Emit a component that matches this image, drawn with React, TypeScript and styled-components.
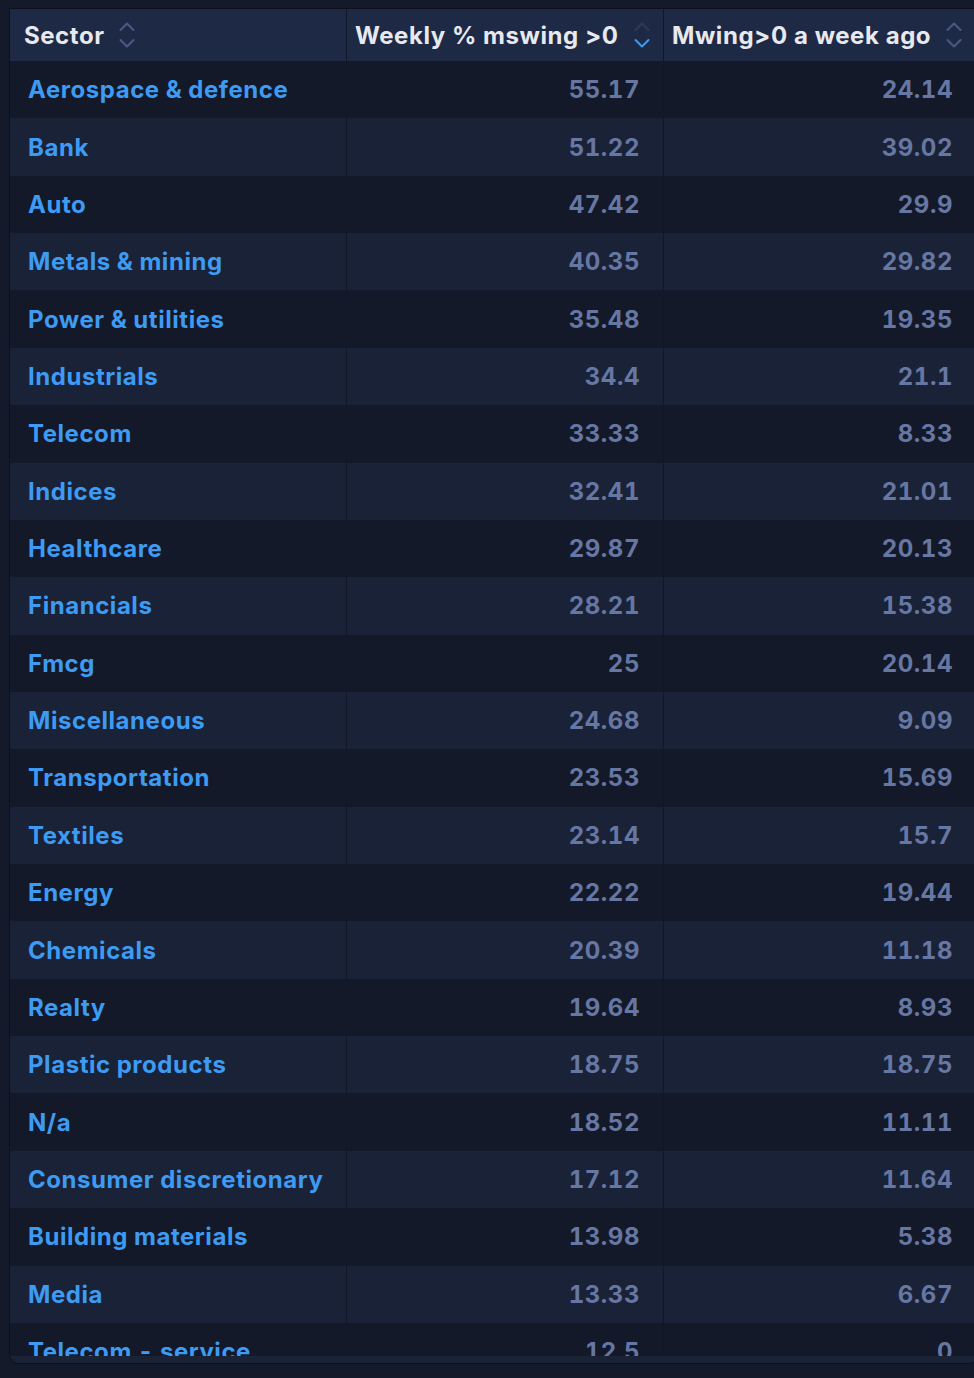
import { FC } from 'react'
import styled, { createGlobalStyle } from 'styled-components'

const GlobalStyle = createGlobalStyle`
  html, body {
    margin: 0;
    padding: 0;
    background: #151a2a;
    overflow: hidden;
    font-family: Inter, 'Noto Sans', sans-serif;
  }
`

const Frame = styled('div')`
  margin: 8px 0 0 9px;
  width: 968px;
  border: 1px solid #0c101b;
  border-radius: 0 0 10px 10px;
  background: #1a2236;
  overflow: hidden;
`

const Scroller = styled('div')`
  height: 1347px;
  overflow: hidden;
`

const Track = styled('div')`
  height: 7px;
  background: #1a2236;
`

const Table = styled('table')`
  width: 966px;
  table-layout: fixed;
  border-collapse: separate;
  border-spacing: 0;
`

const HeadCell = styled('th')<{ $w: number; $first?: boolean }>`
  box-sizing: border-box;
  width: ${(p) => p.$w}px;
  height: 52px;
  padding: 0 0 0 ${(p) => (p.$first ? 14 : 8)}px;
  background: #1e2a45;
  border-right: 1px solid #111726;
  text-align: left;
  color: #e7e9ef;
  font-size: 24px;
  font-weight: 700;
  letter-spacing: 0.55px;
  white-space: nowrap;

  &:last-child {
    border-right: none;
  }
`

const HeadInner = styled('div')`
  display: flex;
  align-items: center;
  gap: 15px;
`

const Row = styled('tr')<{ $alt: boolean }>`
  background: ${(p) => (p.$alt ? '#1a2237' : '#131928')};
`

const Cell = styled('td')<{ $num?: boolean }>`
  box-sizing: border-box;
  height: 57.36px;
  padding: 0 ${(p) => (p.$num ? '23px' : '0')} 0 ${(p) => (p.$num ? '0' : '18px')};
  border-right: 1px solid #111726;
  text-align: ${(p) => (p.$num ? 'right' : 'left')};
  color: ${(p) => (p.$num ? '#6777a3' : '#3d9bf3')};
  font-size: 24px;
  font-weight: 700;
  letter-spacing: 0.55px;
  word-spacing: -1px;
  font-variant-numeric: tabular-nums;
  white-space: nowrap;

  &:last-child {
    border-right: none;
  }
`

type SortState = 'none' | 'desc'

const SortIcon: FC<{ state: SortState }> = ({ state }) => {
  const grey = '#4b5985'
  const up = state === 'desc' ? '#2f3a57' : grey
  const down = state === 'desc' ? '#3d9bf3' : grey
  return (
    <svg width="16" height="26" viewBox="0 0 16 26" fill="none">
      <path
        d="M1.5 8 L8 1.5 L14.5 8"
        stroke={up}
        strokeWidth="2"
        strokeLinecap="round"
        strokeLinejoin="round"
      />
      <path
        d="M1.5 18 L8 24.5 L14.5 18"
        stroke={down}
        strokeWidth="2"
        strokeLinecap="round"
        strokeLinejoin="round"
      />
    </svg>
  )
}

const rows: [string, string, string][] = [
  ['Aerospace & defence', '55.17', '24.14'],
  ['Bank', '51.22', '39.02'],
  ['Auto', '47.42', '29.9'],
  ['Metals & mining', '40.35', '29.82'],
  ['Power & utilities', '35.48', '19.35'],
  ['Industrials', '34.4', '21.1'],
  ['Telecom', '33.33', '8.33'],
  ['Indices', '32.41', '21.01'],
  ['Healthcare', '29.87', '20.13'],
  ['Financials', '28.21', '15.38'],
  ['Fmcg', '25', '20.14'],
  ['Miscellaneous', '24.68', '9.09'],
  ['Transportation', '23.53', '15.69'],
  ['Textiles', '23.14', '15.7'],
  ['Energy', '22.22', '19.44'],
  ['Chemicals', '20.39', '11.18'],
  ['Realty', '19.64', '8.93'],
  ['Plastic products', '18.75', '18.75'],
  ['N/a', '18.52', '11.11'],
  ['Consumer discretionary', '17.12', '11.64'],
  ['Building materials', '13.98', '5.38'],
  ['Media', '13.33', '6.67'],
  ['Telecom - service', '12.5', '0'],
]

const App: FC = () => {
  return (
    <>
      <GlobalStyle />
      <Frame>
        <Scroller>
          <Table>
            <thead>
              <tr>
                <HeadCell $w={337} $first>
                  <HeadInner>
                    Sector
                    <SortIcon state="none" />
                  </HeadInner>
                </HeadCell>
                <HeadCell $w={317}>
                  <HeadInner>
                    Weekly % mswing &gt;0
                    <SortIcon state="desc" />
                  </HeadInner>
                </HeadCell>
                <HeadCell $w={312}>
                  <HeadInner>
                    Mwing&gt;0 a week ago
                    <SortIcon state="none" />
                  </HeadInner>
                </HeadCell>
              </tr>
            </thead>
            <tbody>
              {rows.map(([sector, weekly, ago], i) => (
                <Row key={sector} $alt={i % 2 === 1}>
                  <Cell>{sector}</Cell>
                  <Cell $num>{weekly}</Cell>
                  <Cell $num>{ago}</Cell>
                </Row>
              ))}
            </tbody>
          </Table>
        </Scroller>
        <Track />
      </Frame>
    </>
  )
}

export default App
